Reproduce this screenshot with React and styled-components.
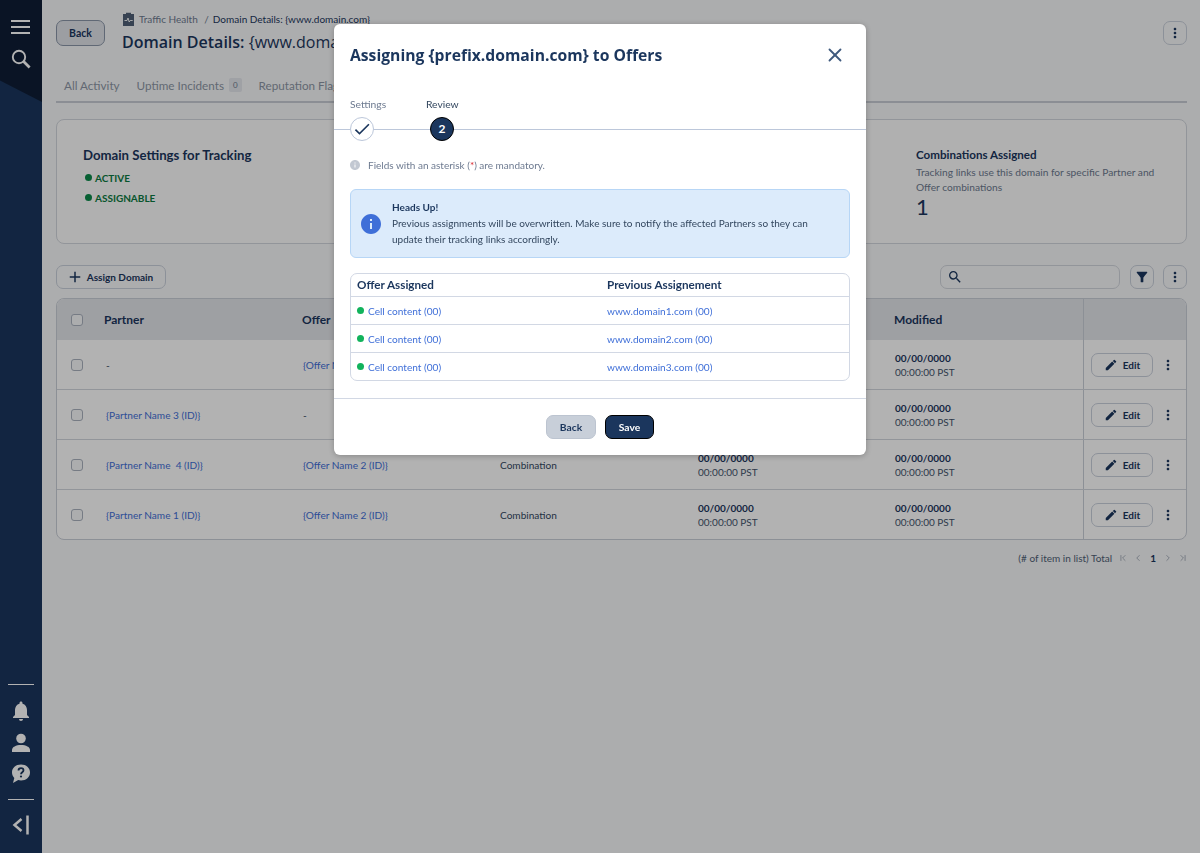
import React from "react";
import styled, { createGlobalStyle } from "styled-components";
import { MdEdit, MdMoreVert, MdFilterAlt, MdAdd, MdCheck, MdInfo, MdNotifications, MdSearch } from "react-icons/md";
import { LuX, LuChevronLeft, LuChevronRight, LuChevronFirst, LuChevronLast } from "react-icons/lu";

const GlobalStyle = createGlobalStyle`
  html, body { margin: 0; padding: 0; height: 100%; }
  body {
    background: #f7f8f9;
    font-family: Lato, "Liberation Sans", sans-serif;
    color: #1b365d;
    overflow: hidden;
  }
  * { box-sizing: border-box; }
`;

const Page = styled.div`
  display: flex;
  height: 853px;
`;

const Sidebar = styled.aside`
  position: relative;
  width: 42px;
  flex-shrink: 0;
  background: #1b365d;
  display: flex;
  flex-direction: column;
  align-items: center;
  color: #fff;
  padding: 15px 0 16px;
  &::before {
    content: "";
    position: absolute;
    top: 0;
    left: 0;
    width: 100%;
    height: 102px;
    background: #0f1e36;
    clip-path: polygon(0 0, 100% 0, 100% 100%, 0 79%);
  }
  & > * { position: relative; }
`;

const NavIcon = styled.div`
  width: 24px;
  height: 24px;
  display: flex;
  align-items: center;
  justify-content: center;
  margin-top: ${(p) => p.$top || 0}px;
`;

const Spacer = styled.div`
  flex: 1;
`;

const NavRule = styled.div`
  width: 26px;
  height: 1px;
  background: #fff;
  margin-top: ${(p) => p.$top || 0}px;
`;

const Main = styled.main`
  flex: 1;
  min-width: 0;
  padding: 11px 13px 0 14px;
`;

const TopBar = styled.div`
  display: flex;
  align-items: center;
  height: 44px;
`;

const OutlineButton = styled.button`
  font-family: inherit;
  font-size: 10px;
  font-weight: 700;
  color: #1b365d;
  display: inline-flex;
  align-items: center;
  justify-content: center;
  height: 24px;
  border-radius: 7px;
  border: 1px solid #c9d0db;
  background: transparent;
  padding: 0;
`;

const BackButton = styled(OutlineButton)`
  width: 49px;
  height: 26px;
  margin-right: 17px;
  font-size: 10.5px;
  background: #e0e3e9;
  border-color: #8a96a8;
`;

const IconButton = styled(OutlineButton)`
  width: 24px;
  font-size: 16px;
  flex-shrink: 0;
`;

const Heading = styled.div`
  flex: 1;
  margin-top: -1px;
`;

const Crumbs = styled.div`
  display: flex;
  align-items: center;
  gap: 4px;
  font-size: 10px;
  line-height: 14px;
  color: #6d7a90;
  b {
    font-weight: 400;
    color: #1b365d;
  }
`;

const PageTitle = styled.h1`
  margin: 5px 0 0;
  font-family: "Open Sans", sans-serif;
  font-size: 16px;
  line-height: 22px;
  font-weight: 600;
  white-space: nowrap;
  span { font-weight: 400; }
`;

const Tabs = styled.div`
  display: flex;
  align-items: center;
  gap: 17px;
  height: 32px;
  margin-top: 16px;
  padding: 0 8px 3px;
  border-bottom: 2px solid #c8ccd4;
`;

const Tab = styled.div`
  font-size: 11.7px;
  color: #8d96a5;
  display: flex;
  align-items: center;
  gap: 5px;
`;

const Count = styled.span`
  font-size: 8px;
  background: #e4e7ec;
  padding: 2px 4px;
  border-radius: 2px;
  color: #6d7a90;
`;

const SummaryCard = styled.section`
  height: 125px;
  margin-top: 16px;
  background: #fcfcfc;
  border: 1px solid #d2d6dd;
  border-radius: 8px;
  display: flex;
  justify-content: space-between;
  padding: 0 30px 0 26px;
`;

const CardBlock = styled.div`
  padding-top: ${(p) => p.$top}px;
  width: ${(p) => p.$width}px;
`;

const CardTitle = styled.h3`
  margin: 0;
  font-size: ${(p) => p.$size}px;
  line-height: 18px;
  font-weight: 700;
`;

const StatusLine = styled.div`
  display: flex;
  align-items: center;
  gap: 3px;
  margin: 6px 0 0 2px;
  height: 15px;
  font-size: 10px;
  font-weight: 700;
  color: #0b7a41;
  & + & { margin-top: 5px; }
`;

const Dot = styled.span`
  width: 7px;
  height: 7px;
  border-radius: 50%;
  background: ${(p) => p.$color};
  flex-shrink: 0;
`;

const CardText = styled.p`
  margin: 1px 0 0;
  font-size: 10.2px;
  line-height: 15px;
  color: #6d7a90;
`;

const BigNumber = styled.div`
  font-size: 22px;
  line-height: 24px;
  font-weight: 400;
`;

const Toolbar = styled.div`
  display: flex;
  align-items: center;
  gap: 9px;
  margin-top: 21px;
`;

const AssignButton = styled(OutlineButton)`
  width: 110px;
  gap: 3px;
  margin-right: auto;
  padding-right: 3px;
  svg { font-size: 18px; }
`;

const SearchBox = styled.div`
  width: 180px;
  height: 24px;
  margin-right: 1px;
  border: 1px solid #d2d6dd;
  border-radius: 7px;
  display: flex;
  align-items: center;
  padding-left: 6px;
  font-size: 16px;
`;

const Table = styled.div`
  margin-top: 9px;
  background: #fff;
  border: 1px solid #c9ced7;
  border-radius: 8px;
  overflow: hidden;
`;

const Row = styled.div`
  display: grid;
  grid-template-columns: 47px 198px 198px 198px 196px 189px 1fr;
  align-items: center;
  height: ${(p) => (p.$head ? 41 : p.$last ? 49 : 50)}px;
  background: ${(p) => (p.$head ? "#e3e5ea" : "transparent")};
  border-bottom: ${(p) => (p.$head || p.$last ? "none" : "1px solid #d2d6dd")};
`;

const HeadCell = styled.div`
  font-size: 12px;
  font-weight: 700;
`;

const CheckCell = styled.div`
  display: flex;
  justify-content: flex-end;
  padding-right: 21px;
`;

const CheckBox = styled.span`
  width: 12px;
  height: 12px;
  border: 1px solid #a9b1be;
  border-radius: 3px;
  background: #f7f8f9;
`;

const Cell = styled.div`
  font-size: 10.1px;
  padding-left: ${(p) => p.$pad || 0}px;
  color: #33475f;
`;

const LinkText = styled.span`
  color: #3f6fd8;
  font-size: 10.1px;
  white-space: pre;
`;

const DateCell = styled.div`
  font-size: 10px;
  line-height: 14px;
  padding-left: ${(p) => p.$pad || 0}px;
  b { display: block; font-weight: 700; }
  span { color: #44546c; }
`;

const ActionCell = styled.div`
  align-self: stretch;
  border-left: 1px solid #c9ced7;
  display: flex;
  align-items: center;
  padding-left: 7px;
  gap: 7px;
  font-size: 16px;
`;

const EditButton = styled(OutlineButton)`
  width: 62px;
  gap: 5px;
  svg { font-size: 14px; }
`;

const Pagination = styled.div`
  display: flex;
  justify-content: flex-end;
  align-items: center;
  gap: 5px;
  margin: 12px -1px 0 0;
  font-size: 10px;
  color: #4f5f76;
  svg { color: #9aa3b2; font-size: 10px; }
  svg:first-of-type { margin-left: 1px; }
  b { color: #1b365d; margin: 0 2px; }
`;

const Backdrop = styled.div`
  position: fixed;
  inset: 0;
  background: rgba(0, 0, 0, 0.3);
  display: flex;
  justify-content: center;
  align-items: flex-start;
  padding-top: 24px;
`;

const Modal = styled.div`
  width: 532px;
  height: 431px;
  background: #fff;
  border-radius: 6px;
  box-shadow: 0 1px 6px rgba(0, 0, 0, 0.25);
`;

const ModalHeader = styled.div`
  display: flex;
  justify-content: space-between;
  align-items: center;
  height: 62px;
  padding: 0 20px 0 16px;
  svg { color: #3f5a7e; font-size: 22px; }
`;

const ModalTitle = styled.h2`
  margin: 0;
  font-family: "Open Sans", sans-serif;
  font-size: 15.7px;
  font-weight: 700;
`;

const Stepper = styled.div`
  position: relative;
  display: flex;
  height: 54px;
  padding: 10px 0 0 16px;
  &::after {
    content: "";
    position: absolute;
    left: 0;
    right: 0;
    top: 43px;
    height: 1px;
    background: #bcc7da;
  }
`;

const Step = styled.div`
  width: ${(p) => p.$width}px;
  font-size: 10.3px;
  line-height: 16px;
  color: ${(p) => (p.$active ? "#33475f" : "#6d7a90")};
`;

const StepCircle = styled.div`
  position: relative;
  z-index: 1;
  width: 24px;
  height: 24px;
  margin: 5px 0 0 ${(p) => p.$left || 0}px;
  border-radius: 50%;
  display: flex;
  align-items: center;
  justify-content: center;
  border: 1px solid ${(p) => (p.$done ? "#bcc7da" : "#000")};
  background: ${(p) => (p.$done ? "#fff" : "#1b365d")};
  color: ${(p) => (p.$done ? "#1b365d" : "#fff")};
  font-size: 12px;
  font-weight: 700;
`;

const Note = styled.div`
  display: flex;
  align-items: center;
  gap: 7px;
  padding: 17px 0 0 16px;
  font-size: 10px;
  line-height: 16px;
  color: #6d7a90;
  svg { color: #c2c8d2; font-size: 12px; margin-left: -1px; }
  i { color: #d8232a; font-style: normal; }
`;

const Alert = styled.div`
  display: flex;
  align-items: center;
  gap: 9px;
  height: 69px;
  margin: 16px 16px 0;
  padding: 0 8px 2px;
  background: #dcebfb;
  border: 1px solid #b7d6f6;
  border-radius: 6px;
  svg { color: #3f6fd8; font-size: 24px; flex-shrink: 0; margin-top: 2px; }
`;

const AlertBody = styled.div`
  max-width: 425px;
  font-size: 10px;
  line-height: 16px;
  color: #33475f;
  b { display: block; color: #1b365d; }
`;

const AssignTable = styled.div`
  margin: 15px 16px 0;
  height: 108px;
  border: 1px solid #d2d8e4;
  border-radius: 7px;
  overflow: hidden;
`;

const AssignRow = styled.div`
  display: grid;
  grid-template-columns: 250px 1fr;
  align-items: center;
  height: ${(p) => (p.$head ? 22 : 28)}px;
  padding: 0 0 ${(p) => (p.$head ? 2 : 0)}px 6px;
  border-top: ${(p) => (p.$head ? "none" : "1px solid #d2d8e4")};
  font-size: 11.7px;
  font-weight: ${(p) => (p.$head ? 700 : 400)};
`;

const AssignCell = styled.div`
  display: flex;
  align-items: center;
  gap: 4px;
`;

const ModalFooter = styled.div`
  display: flex;
  justify-content: center;
  gap: 9px;
  height: 57px;
  margin-top: 17px;
  padding-top: 16px;
  border-top: 1px solid #d2d8e4;
`;

const FooterButton = styled(OutlineButton)`
  width: ${(p) => p.$width}px;
  font-size: 10.3px;
  background: ${(p) => (p.$primary ? "#1b365d" : "#c8cfd9")};
  color: ${(p) => (p.$primary ? "#fff" : "#1b365d")};
  border-color: ${(p) => (p.$primary ? "#000" : "#bcc4d0")};
`;

const rows = [
  { partner: null, offer: "{Offer Name 2 (ID)}", type: "Partner" },
  { partner: "{Partner Name 3 (ID)}", offer: null, type: "Partner" },
  { partner: "{Partner Name  4 (ID)}", offer: "{Offer Name 2 (ID)}", type: "Combination" },
  { partner: "{Partner Name 1 (ID)}", offer: "{Offer Name 2 (ID)}", type: "Combination" },
];

const assignments = ["www.domain1.com (00)", "www.domain2.com (00)", "www.domain3.com (00)"];

function Dates({ pad }) {
  return (
    <DateCell $pad={pad}>
      <b>00/00/0000</b>
      <span>00:00:00 PST</span>
    </DateCell>
  );
}

function App() {
  return (
    <>
      <GlobalStyle />
      <Page>
        <Sidebar>
          <NavIcon>
            <svg width="20" height="14" viewBox="0 0 20 14" fill="#fff">
              <rect y="0" width="19" height="2" />
              <rect y="6" width="19" height="2" />
              <rect y="12" width="19" height="2" />
            </svg>
          </NavIcon>
          <NavIcon $top={8}>
            <svg width="20" height="20" viewBox="0 0 20 20" fill="none" stroke="#fff">
              <circle cx="8" cy="8" r="6.2" strokeWidth="1.9" />
              <path d="m12.6 12.6 6 6" strokeWidth="2.8" />
            </svg>
          </NavIcon>
          <Spacer />
          <NavRule />
          <NavIcon $top={14}><MdNotifications size={24} /></NavIcon>
          <NavIcon $top={8}>
            <svg width="20" height="20" viewBox="0 0 20 20" fill="#fff">
              <circle cx="10" cy="5.5" r="4.8" />
              <path d="M1 19v-2c0-3 4-5 9-5s9 2 9 5v2z" />
            </svg>
          </NavIcon>
          <NavIcon $top={7}>
            <svg width="20" height="20" viewBox="0 0 20 20">
              <path fill="#fff" d="M10 .5c5.2 0 9 3.4 9 8s-3.8 8-9 8c-1 0-1.9-.1-2.8-.4L2 19l1.3-5C1.9 12.6 1 10.7 1 8.5c0-4.6 3.8-8 9-8z" />
              <path fill="none" stroke="#1b365d" strokeWidth="1.8" d="M7.5 6.5c0-1.5 1.1-2.4 2.5-2.4s2.5.9 2.5 2.2c0 2-2.5 1.900-2.5 3.900" />
              <circle cx="10" cy="12.5" r="1.1" fill="#1b365d" />
            </svg>
          </NavIcon>
          <NavRule $top={13} />
          <NavIcon $top={13}>
            <svg width="18" height="22" viewBox="0 0 18 22" fill="none" stroke="#fff" strokeWidth="2.5">
              <path d="M9.5 5 2.5 11l7 6" />
              <path d="M15.5 1.5v19" />
            </svg>
          </NavIcon>
        </Sidebar>
        <Main>
          <TopBar>
            <BackButton>Back</BackButton>
            <Heading>
              <Crumbs>
                <svg width="13" height="14" viewBox="0 0 13 14">
                  <path fill="#4f5f76" d="M1 2h3V.8h5V2h3v12H1z" />
                  <path fill="none" stroke="#fff" strokeWidth="0.9" d="M2.5 8.5h2.5l1-2.5 1.2 4 1-1.5h2.5" />
                </svg>
                <span>Traffic Health</span>
                <span>&nbsp;/</span>
                <b>Domain Details: {"{www.domain.com}"}</b>
              </Crumbs>
              <PageTitle>Domain Details: <span>{"{www.domain.com}"}</span></PageTitle>
            </Heading>
            <IconButton><MdMoreVert /></IconButton>
          </TopBar>
          <Tabs>
            <Tab>All Activity</Tab>
            <Tab>Uptime Incidents <Count>0</Count></Tab>
            <Tab>Reputation Flags</Tab>
          </Tabs>
          <SummaryCard>
            <CardBlock $top={26} $width={240}>
              <CardTitle $size={13.2}>Domain Settings for Tracking</CardTitle>
              <StatusLine><Dot $color="#0b8a4a" />ACTIVE</StatusLine>
              <StatusLine><Dot $color="#0b8a4a" />ASSIGNABLE</StatusLine>
            </CardBlock>
            <CardBlock $top={26} $width={240}>
              <CardTitle $size={11.6}>Combinations Assigned</CardTitle>
              <CardText>Tracking links use this domain for specific Partner and Offer combinations</CardText>
              <BigNumber>1</BigNumber>
            </CardBlock>
          </SummaryCard>
          <Toolbar>
            <AssignButton><MdAdd />Assign Domain</AssignButton>
            <SearchBox><MdSearch /></SearchBox>
            <IconButton><MdFilterAlt /></IconButton>
            <IconButton><MdMoreVert /></IconButton>
          </Toolbar>
          <Table>
            <Row $head>
              <CheckCell><CheckBox /></CheckCell>
              <HeadCell>Partner</HeadCell>
              <HeadCell>Offer</HeadCell>
              <HeadCell>Type</HeadCell>
              <HeadCell>Created</HeadCell>
              <HeadCell>Modified</HeadCell>
              <ActionCell />
            </Row>
            {rows.map((row, i) => (
              <Row key={i} $last={i === rows.length - 1}>
                <CheckCell><CheckBox /></CheckCell>
                <Cell $pad={2}>{row.partner ? <LinkText>{row.partner}</LinkText> : "-"}</Cell>
                <Cell $pad={1}>{row.offer ? <LinkText>{row.offer}</LinkText> : "-"}</Cell>
                <Cell>{row.type}</Cell>
                <Dates />
                <Dates pad={1} />
                <ActionCell>
                  <EditButton><MdEdit />Edit</EditButton>
                  <MdMoreVert />
                </ActionCell>
              </Row>
            ))}
          </Table>
          <Pagination>
            <span>(# of item in list) Total</span>
            <LuChevronFirst />
            <LuChevronLeft />
            <b>1</b>
            <LuChevronRight />
            <LuChevronLast />
          </Pagination>
        </Main>
      </Page>
      <Backdrop>
        <Modal>
          <ModalHeader>
            <ModalTitle>Assigning {"{prefix.domain.com}"} to Offers</ModalTitle>
            <LuX />
          </ModalHeader>
          <Stepper>
            <Step $width={76}>
              Settings
              <StepCircle $done><MdCheck size={20} /></StepCircle>
            </Step>
            <Step $active $width={60}>
              Review
              <StepCircle $left={4}>2</StepCircle>
            </Step>
          </Stepper>
          <Note><MdInfo /><span>Fields with an asterisk (<i>*</i>) are mandatory.</span></Note>
          <Alert>
            <MdInfo />
            <AlertBody>
              <b>Heads Up!</b>
              Previous assignments will be overwritten. Make sure to notify the affected Partners so they can update their tracking links accordingly.
            </AlertBody>
          </Alert>
          <AssignTable>
            <AssignRow $head>
              <div>Offer Assigned</div>
              <div>Previous Assignement</div>
            </AssignRow>
            {assignments.map((domain) => (
              <AssignRow key={domain}>
                <AssignCell><Dot $color="#12b35c" /><LinkText>Cell content (00)</LinkText></AssignCell>
                <LinkText>{domain}</LinkText>
              </AssignRow>
            ))}
          </AssignTable>
          <ModalFooter>
            <FooterButton $width={50}>Back</FooterButton>
            <FooterButton $primary $width={49}>Save</FooterButton>
          </ModalFooter>
        </Modal>
      </Backdrop>
    </>
  );
}

export default App;
